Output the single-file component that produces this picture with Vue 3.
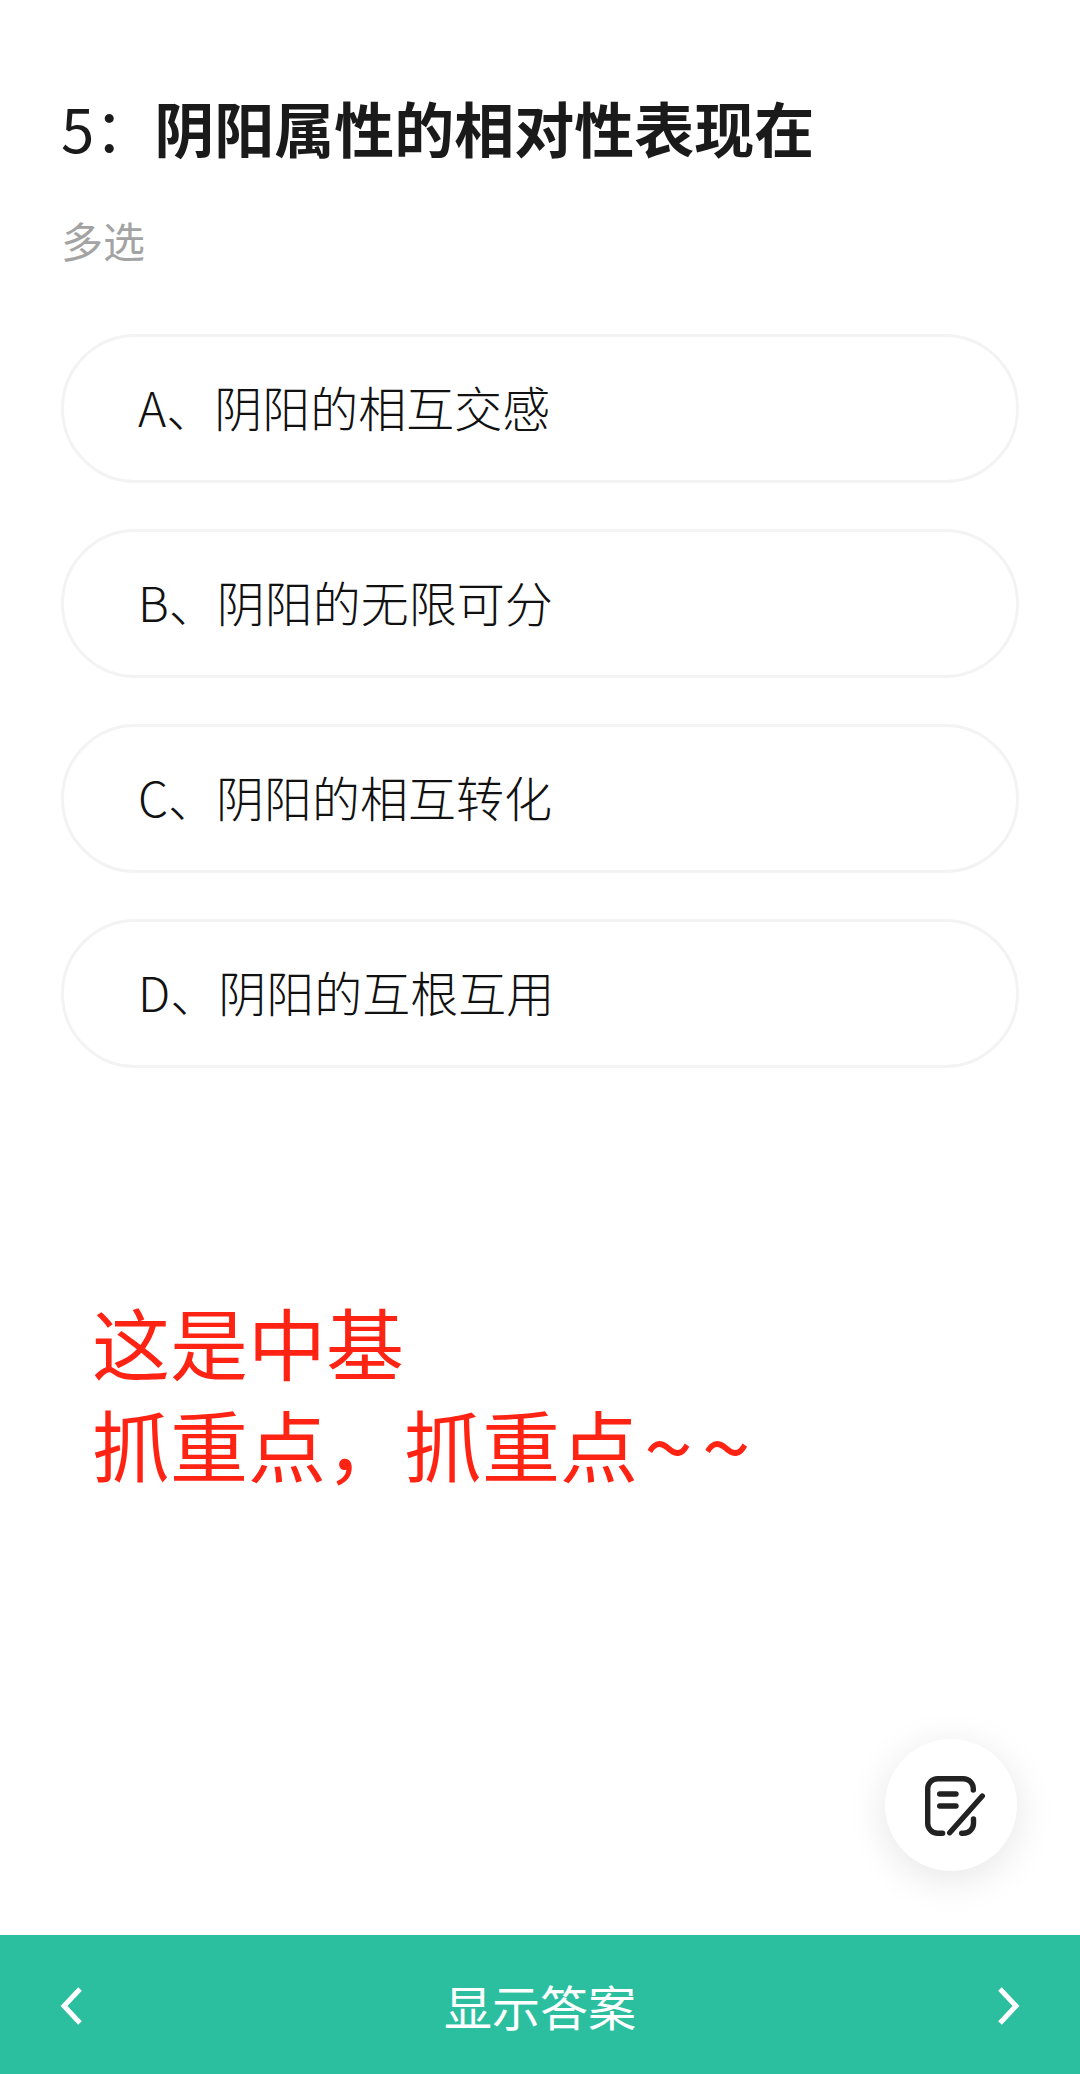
<script setup>
const options = [
  "A、阴阳的相互交感",
  "B、阴阳的无限可分",
  "C、阴阳的相互转化",
  "D、阴阳的互根互用",
];
</script>

<template>
  <div class="page">
    <main class="content">
      <h1 class="question"><span class="question-no">5：</span>阴阳属性的相对性表现在</h1>
      <p class="question-type">多选</p>

      <div class="options">
        <div v-for="item in options" :key="item" class="option">{{ item }}</div>
      </div>

      <div class="note">
        <div>这是中基</div>
        <div>抓重点，抓重点<span class="tilde">~~</span></div>
      </div>
    </main>

    <button class="fab" aria-label="笔记">
      <svg width="62" height="62" viewBox="0 0 62 62" fill="none" stroke="#222" stroke-width="5.4" stroke-linecap="round" stroke-linejoin="round">
        <path d="M17.6 57.3H12.7a10 10 0 0 1-10-10V12.7a10 10 0 0 1 10-10h25.6a10 10 0 0 1 10 10V14" />
        <path d="M48.5 43v4.3a10 10 0 0 1-10 10h-1.8" />
        <path d="M57.3 20L24.7 56.7" />
        <path d="M14.7 18H31" />
        <path d="M14.7 30H31" />
      </svg>
    </button>

    <footer class="footer">
      <svg class="arrow" width="24" height="38" viewBox="0 0 24 38" fill="none" stroke="#fff" stroke-width="5" stroke-linejoin="miter">
        <path d="M21 2L5 19l16 17" />
      </svg>
      <span class="footer-label">显示答案</span>
      <svg class="arrow" width="24" height="38" viewBox="0 0 24 38" fill="none" stroke="#fff" stroke-width="5" stroke-linejoin="miter">
        <path d="M3 2l16 17L3 36" />
      </svg>
    </footer>
  </div>
</template>

<style>
html,
body {
  margin: 0;
  background: #fff;
}
</style>

<style scoped>
.page {
  position: relative;
  display: flex;
  flex-direction: column;
  width: 1080px;
  height: 2074px;
  overflow: hidden;
  background: #fff;
  font-family: "Noto Sans CJK SC", "Noto Sans", sans-serif;
}

.content {
  flex: 1;
  padding: 87px 60px 0 61px;
}

.question {
  margin: 0;
  font-size: 60px;
  line-height: 80px;
  font-weight: 700;
  color: #1a1a1a;
}

.question-no {
  font-weight: 400;
}

.question-type {
  margin: 43px 0 0;
  font-size: 42px;
  line-height: 60px;
  color: #a3a3a3;
}

.options {
  display: flex;
  flex-direction: column;
  gap: 46px;
  margin-top: 64px;
}

.option {
  box-sizing: border-box;
  display: flex;
  align-items: center;
  width: 958px;
  height: 149px;
  padding: 0 0 6px 74px;
  border: 3px solid #f3f3f3;
  border-radius: 75px;
  font-size: 48px;
  font-weight: 300;
  color: #111;
}

.note {
  margin-top: 222px;
  padding-left: 31px;
  font-size: 78px;
  line-height: 102px;
  color: #ff2314;
}

.tilde {
  margin-left: 6px;
  font-size: 88px;
  line-height: 0;
  letter-spacing: 9px;
  vertical-align: -4px;
}

.fab {
  position: absolute;
  left: 885px;
  top: 1739px;
  display: flex;
  align-items: center;
  justify-content: center;
  width: 132px;
  height: 132px;
  padding: 3px 0 0 9px;
  border: none;
  border-radius: 50%;
  background: #fff;
  box-shadow: 0 8px 40px rgba(0, 0, 0, 0.1);
}

.footer {
  display: flex;
  align-items: center;
  justify-content: space-between;
  height: 139px;
  padding: 0 59px;
  background: #2bbfa0;
}

.footer-label {
  font-size: 48px;
  color: #fff;
}

.arrow {
  display: block;
  margin-top: 3px;
}
</style>
